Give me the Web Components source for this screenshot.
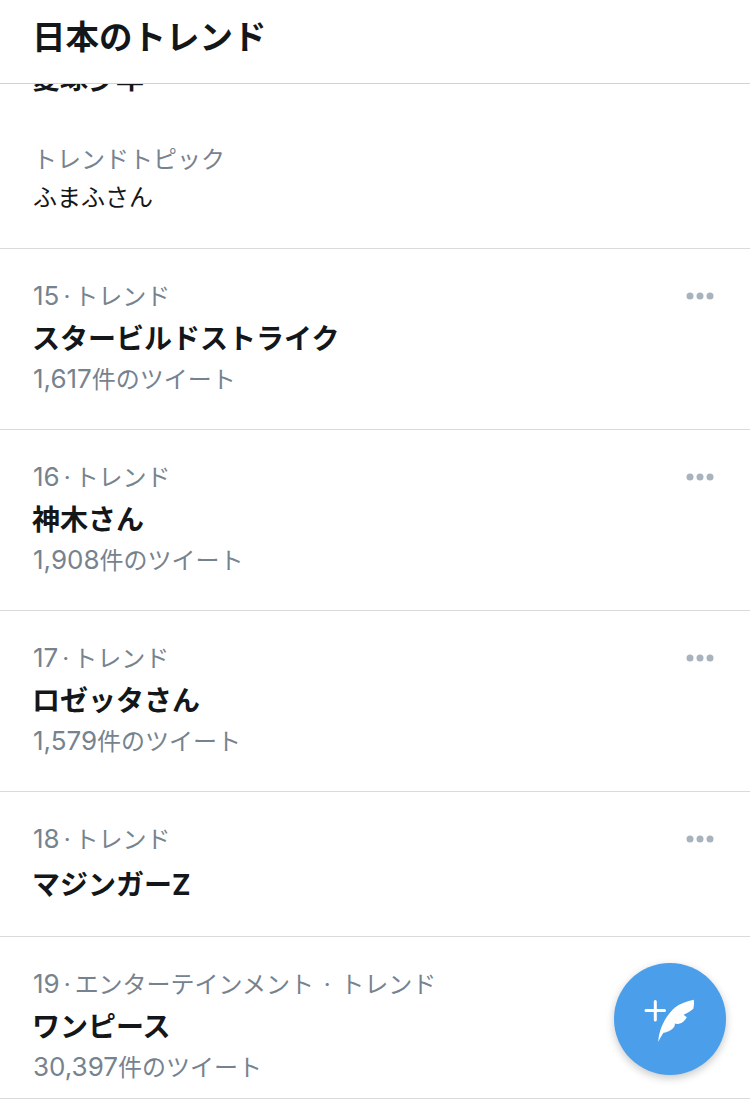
<!DOCTYPE html>
<html lang="ja">
<head>
<meta charset="utf-8">
<title>日本のトレンド</title>
<style>
    html, body {
        margin: 0;
        background: #fff;
    }
    body {
        font-family: Inter, "Noto Sans CJK JP", sans-serif;
    }
    .num {
        font-size: 26px;
        line-height: 0;
    }
</style>
</head>
<body>
<trend-page>
    <trend-header slot="header">日本のトレンド</trend-header>

    <clipped-trend>愛球少年</clipped-trend>

    <trend-row topic>
        <span slot="meta">トレンドトピック</span>
        <span slot="name">ふまふさん</span>
    </trend-row>

    <trend-row rank="15">
        <span slot="meta">トレンド</span>
        <span slot="name">スタービルドストライク</span>
        <span slot="count"><span class="num">1,617</span>件のツイート</span>
    </trend-row>

    <trend-row rank="16">
        <span slot="meta">トレンド</span>
        <span slot="name">神木さん</span>
        <span slot="count"><span class="num">1,908</span>件のツイート</span>
    </trend-row>

    <trend-row rank="17">
        <span slot="meta">トレンド</span>
        <span slot="name">ロゼッタさん</span>
        <span slot="count"><span class="num">1,579</span>件のツイート</span>
    </trend-row>

    <trend-row rank="18" nocount>
        <span slot="meta">トレンド</span>
        <span slot="name">マジンガーZ</span>
    </trend-row>

    <trend-row rank="19" compact>
        <span slot="meta">エンターテインメント · トレンド</span>
        <span slot="name">ワンピース</span>
        <span slot="count"><span class="num">30,397</span>件のツイート</span>
    </trend-row>

    <compose-fab slot="fab"></compose-fab>
</trend-page>

<script>
class TrendPage extends HTMLElement {
    connectedCallback() {
        this.attachShadow({ mode: 'open' });
        this.shadowRoot.innerHTML = `
            <style>
                :host {
                    display: flex;
                    flex-direction: column;
                    position: relative;
                    height: 1112px;
                    overflow: hidden;
                    background: #fff;
                }
                .list {
                    flex: 1;
                    min-height: 0;
                    overflow: hidden;
                }
            </style>
            <slot name="header"></slot>
            <div class="list"><slot></slot></div>
            <slot name="fab"></slot>
        `;
    }
}

class TrendHeader extends HTMLElement {
    connectedCallback() {
        this.attachShadow({ mode: 'open' });
        this.shadowRoot.innerHTML = `
            <style>
                :host {
                    display: flex;
                    flex: none;
                    align-items: center;
                    height: 69px;
                    padding: 0 32px 14px;
                    border-bottom: 1px solid #d2d3d5;
                    color: #14171a;
                    font-size: 33.500px;
                    font-weight: 700;
                }
            </style>
            <slot></slot>
        `;
    }
}

// the row scrolled under the header: only the bottom of its name still shows
class ClippedTrend extends HTMLElement {
    connectedCallback() {
        this.attachShadow({ mode: 'open' });
        this.shadowRoot.innerHTML = `
            <style>
                :host {
                    display: flex;
                    flex-direction: column;
                    justify-content: flex-end;
                    height: 20px;
                    padding: 0 32px;
                    overflow: hidden;
                    color: #14171a;
                    font-size: 28px;
                    font-weight: 700;
                }
                div {
                    flex: none;
                    line-height: 50px;
                }
            </style>
            <div><slot></slot></div>
        `;
    }
}

class MoreDots extends HTMLElement {
    connectedCallback() {
        this.attachShadow({ mode: 'open' });
        this.shadowRoot.innerHTML = `
            <style>
                :host {
                    display: block;
                    flex: none;
                    width: 28px;
                    height: 8px;
                }
                svg {
                    display: block;
                }
            </style>
            <svg width="28" height="8" viewBox="0 0 28 8" fill="#a9b3bd">
                <circle cx="4" cy="4" r="3.5"/>
                <circle cx="14" cy="4" r="3.5"/>
                <circle cx="24" cy="4" r="3.5"/>
            </svg>
        `;
    }
}

class TrendRow extends HTMLElement {
    connectedCallback() {
        const rank = this.getAttribute('rank');
        const isTopic = this.hasAttribute('topic');
        const hasCount = !isTopic && !this.hasAttribute('nocount');

        this.attachShadow({ mode: 'open' });
        this.shadowRoot.innerHTML = `
            <style>
                :host {
                    display: flex;
                    justify-content: space-between;
                    align-items: flex-start;
                    padding: 31px 36px 33px 33px;
                    border-bottom: 1px solid #d8dadc;
                }
                :host([topic]) {
                    padding-top: 39px;
                    padding-bottom: 30px;
                }
                :host([nocount]) {
                    padding-bottom: 26px;
                }
                :host([compact]) {
                    padding-bottom: 14px;
                }
                .meta {
                    line-height: 34px;
                    color: #76838f;
                    font-size: 24px;
                    word-spacing: 3px;
                }
                .rank {
                    font-size: 26px;
                    line-height: 0;
                }
                .dot {
                    margin: 0 4px;
                }
                .name {
                    margin-top: 1px;
                    margin-left: -1px;
                    line-height: 49px;
                    color: #14171a;
                    font-size: 28px;
                    font-weight: 700;
                }
                :host([nocount]) .name {
                    margin-top: 3px;
                    line-height: 50px;
                }
                :host([topic]) .name {
                    margin-top: 0;
                    margin-left: 0;
                    line-height: 41px;
                    font-size: 24px;
                    font-weight: 400;
                }
                .count {
                    line-height: 32px;
                    color: #76838f;
                    font-size: 24px;
                }
                more-dots {
                    margin-top: 12px;
                }
            </style>
            <div class="body">
                <div class="meta">${rank ? `<span class="rank">${rank}</span><span class="dot">·</span>` : ''}<slot name="meta"></slot></div>
                <div class="name"><slot name="name"></slot></div>
                ${hasCount ? '<div class="count"><slot name="count"></slot></div>' : ''}
            </div>
            ${isTopic || this.hasAttribute('compact') ? '' : '<more-dots></more-dots>'}
        `;
    }
}

class ComposeFab extends HTMLElement {
    connectedCallback() {
        this.attachShadow({ mode: 'open' });
        this.shadowRoot.innerHTML = `
            <style>
                :host {
                    display: block;
                    position: absolute;
                    left: 614px;
                    top: 963px;
                    width: 112px;
                    height: 112px;
                    border-radius: 50%;
                    background: #4a9eea;
                    box-shadow: 0 3px 8px rgba(0, 0, 0, 0.22);
                }
                svg {
                    display: block;
                }
            </style>
            <svg width="112" height="112" viewBox="0 0 112 112">
                <path d="M32 47.500h18.500M41.300 38.500v18.500" stroke="#fff" stroke-width="3" stroke-linecap="round" fill="none"/>
                <path fill="#fff" d="M44.300 79C44.500 71 47.500 62 52.700 54C55.500 50 58 47 61 44.500C66 40.500 73 38.500 79.800 36.800C80.200 40 80 43 79.300 45.800C76 48.500 73 50.500 69.700 51.700C70.800 52.800 71.800 53.600 72.900 54C71 57.500 68.500 60 65 60.800C63.500 61.100 62 61 60.800 60.600C61 61.800 60.800 63 60 64C58 66.800 55 68.800 49.500 69.800C47.500 72.500 45.800 75.800 44.300 79Z"/>
            </svg>
        `;
    }
}

customElements.define('trend-page', TrendPage);
customElements.define('trend-header', TrendHeader);
customElements.define('clipped-trend', ClippedTrend);
customElements.define('more-dots', MoreDots);
customElements.define('trend-row', TrendRow);
customElements.define('compose-fab', ComposeFab);
</script>
</body>
</html>
